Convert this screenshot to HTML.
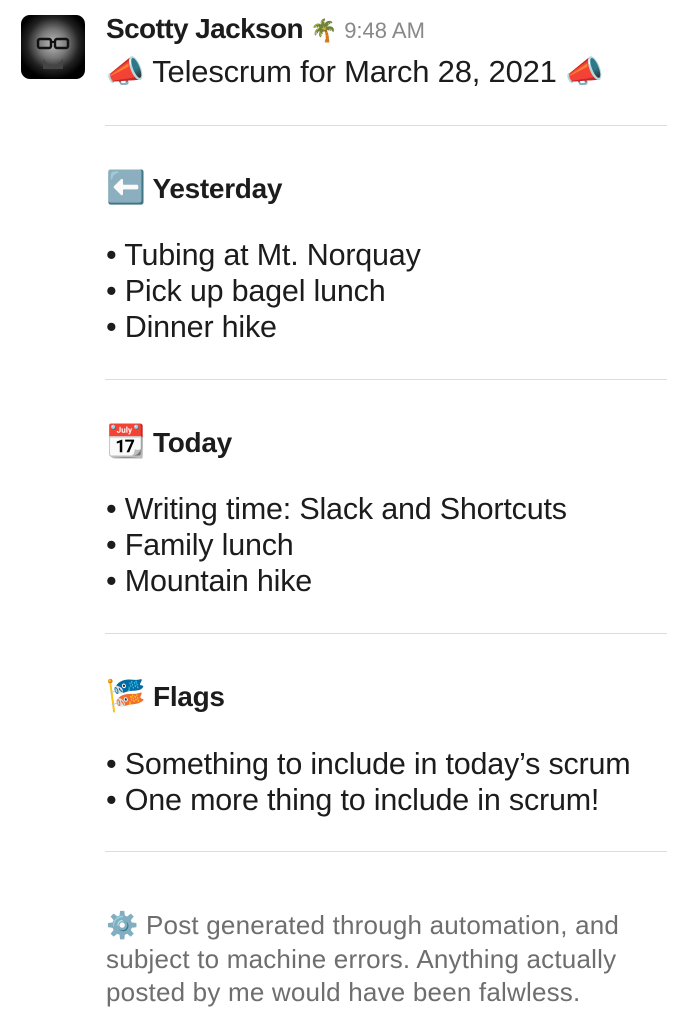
<!DOCTYPE html>
<html><head><meta charset="utf-8"><style>
body{margin:0;width:689px;height:1024px;background:#fff;font-family:"Liberation Sans",sans-serif;color:#1d1c1d;position:relative;overflow:hidden}
.a{position:absolute;white-space:nowrap}
.hr{position:absolute;left:105px;width:562px;height:1px;background:#dcdcdc}
.b{font-size:30.5px;letter-spacing:-0.2px}
.h{font-size:28px;font-weight:bold;letter-spacing:-0.3px}
.f{font-size:26px;color:#6e6e6e;letter-spacing:0.2px}
</style></head><body>
<div class="a" style="left:21px;top:15px;width:64px;height:64px;border-radius:9px;background:radial-gradient(circle at 50% 45%,#bbb 0,#777 30%,#222 55%,#000 75%)">
<svg width="64" height="64"><rect x="17" y="24" width="13" height="9" rx="2" fill="none" stroke="#111" stroke-width="2.5"/><rect x="34" y="24" width="13" height="9" rx="2" fill="none" stroke="#111" stroke-width="2.5"/><path d="M30 27h4" stroke="#111" stroke-width="2"/><path d="M22 44q10 12 20 0v10h-20z" fill="#444"/></svg></div>
<div class="a" style="left:106px;top:13px;font-size:28px;font-weight:bold;letter-spacing:-0.6px">Scotty Jackson <span style="font-size:22px">🌴</span> <span style="font-weight:normal;color:#888;font-size:22px;letter-spacing:0">9:48 AM</span></div>
<div class="a b" style="left:106px;top:53px;font-size:31px">📣 Telescrum for March 28, 2021 📣</div>
<div class="hr" style="top:125px"></div>
<div class="a h" style="left:106px;top:168px"><span style="font-size:32px">⬅️</span> Yesterday</div>
<div class="a b" style="left:106px;top:237px;line-height:36px">• Tubing at Mt. Norquay<br>• Pick up bagel lunch<br>• Dinner hike</div>
<div class="hr" style="top:379px"></div>
<div class="a h" style="left:106px;top:422px"><span style="font-size:32px">📆</span> Today</div>
<div class="a b" style="left:106px;top:491px;line-height:36px">• Writing time: Slack and Shortcuts<br>• Family lunch<br>• Mountain hike</div>
<div class="hr" style="top:633px"></div>
<div class="a h" style="left:106px;top:676px"><span style="font-size:32px">🎏</span> Flags</div>
<div class="a b" style="left:106px;top:746px;line-height:36px">• Something to include in today’s scrum<br>• One more thing to include in scrum!</div>
<div class="hr" style="top:851px"></div>
<div class="a f" style="left:106px;top:909px;line-height:33.5px">⚙️ Post generated through automation, and<br>subject to machine errors. Anything actually<br>posted by me would have been falwless.</div>
</body></html>
